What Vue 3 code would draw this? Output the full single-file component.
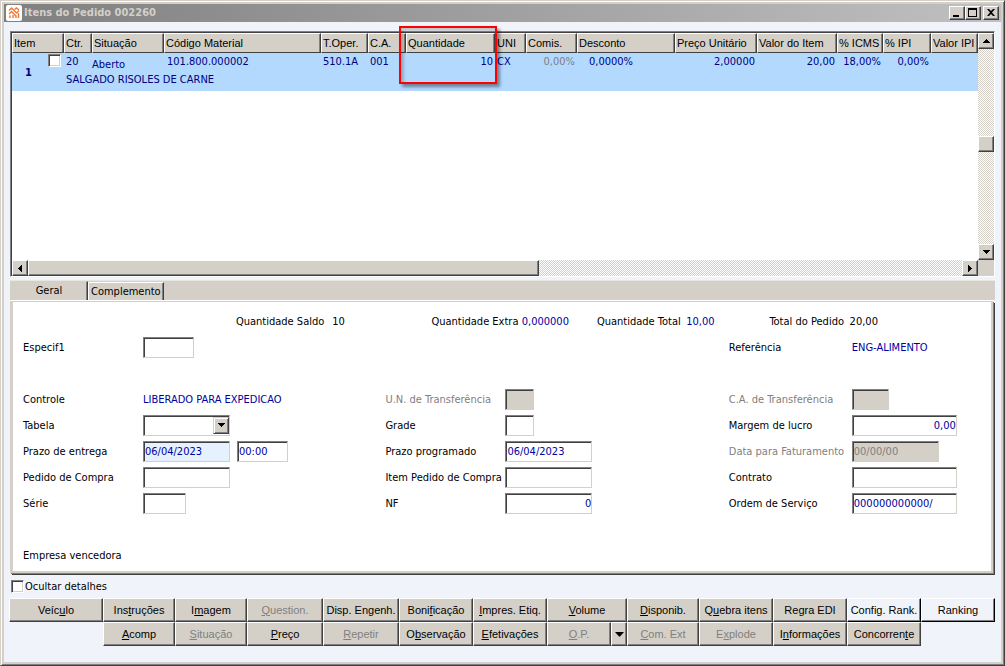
<script setup>
import { ref } from 'vue'

const columns = [
  { w: 52, t: 'Item' }, { w: 28, t: 'Ctr.' }, { w: 72, t: 'Situação' }, { w: 157, t: 'Código Material' },
  { w: 47, t: 'T.Oper.' }, { w: 38, t: 'C.A.' }, { w: 89, t: 'Quantidade' }, { w: 31, t: 'UNI' },
  { w: 51, t: 'Comis.' }, { w: 98, t: 'Desconto' }, { w: 82, t: 'Preço Unitário' }, { w: 80, t: 'Valor do Item' },
  { w: 46, t: '% ICMS' }, { w: 48, t: '% IPI' }, { w: 47, t: 'Valor IPI' }
]

const totals = [
  ['Quantidade Saldo', '10', false],
  ['Quantidade Extra', '0,000000', true],
  ['Quantidade Total', '10,00', true],
  ['Total do Pedido', '20,00', false]
]

const topButtons = [
  ['Veíc', 'u', 'lo'], ['Ins', 't', 'ruções'], ['I', 'm', 'agem'], ['', 'Q', 'uestion.', 'off'],
  ['Disp. Engenh.', '', ''], ['Boni', 'f', 'icação'], ['', 'I', 'mpres. Etiq.'], ['', 'V', 'olume'],
  ['', 'D', 'isponib.'], ['Q', 'u', 'ebra itens'], ['Re', 'g', 'ra EDI'],
  ['Config. Rank.', '', '', 'pale'], ['Ranking', '', '', 'pale']
]
const bottomLeft = [
  ['', 'A', 'comp'], ['', 'S', 'ituação', 'off'], ['', 'P', 'reço'], ['', 'R', 'epetir', 'off'],
  ['O', 'b', 'servação'], ['', 'E', 'fetivações']
]
const bottomRight = [
  ['', 'C', 'om. Ext', 'off'], ['E', 'x', 'plode', 'off'], ['I', 'n', 'formações'], ['Concorren', 't', 'e']
]

const entrega = ref('06/04/2023')
const hora = ref('00:00')
const programado = ref('06/04/2023')
const nf = ref('0')
const margem = ref('0,00')
const faturamento = ref('00/00/00')
const ordem = ref('000000000000/')
</script>

<template>
  <div class="window">
    <header class="titlebar">
      <svg class="logo" viewBox="0 0 16 16" aria-hidden="true">
        <rect x="0" y="0" width="16" height="16" rx="2" fill="#fff" />
        <g fill="none" stroke="#f47a35" stroke-width="1.5">
          <path d="M3 5.500 5.500 3l5 5L13 5.500M8.500 4.500 10.500 3 13 5" />
          <path d="M3 9l2.500-2.500L10 11" />
          <path d="M4 13v-2.500M7 13v-3M10 13v-2.500M12.500 13V8" />
        </g>
      </svg>
      <h1>Itens do Pedido 002260</h1>
      <div class="controls">
        <button type="button" aria-label="Minimizar"><svg viewBox="0 0 12 10"><path d="M2 7h6v2H2z" /></svg></button>
        <button type="button" aria-label="Maximizar"><svg viewBox="0 0 12 10"><path d="M1 0h9v9H1zM2 2v6h7V2z" fill-rule="evenodd" /></svg></button>
        <button type="button" aria-label="Fechar" class="close"><svg viewBox="0 0 12 10"><path d="M2 1h2l2 2 2-2h2L7 4.500 10 8H8L6 6 4 8H2l3-3.500z" /></svg></button>
      </div>
    </header>

    <main>
      <section class="list">
        <div class="rows">
          <table>
            <colgroup><col v-for="(c, i) in columns" :key="c.t" :style="i < 14 ? { width: c.w + 'px' } : {}"></colgroup>
            <thead>
              <tr><th v-for="c in columns" :key="c.t" scope="col">{{ c.t }}</th></tr>
            </thead>
            <tbody>
              <tr class="main-row">
                <td rowspan="2" class="item">
                  <div><b>1</b><input type="checkbox" aria-label="Selecionar item 1"></div>
                </td>
                <td>20</td><td class="low">Aberto</td><td class="code">101.800.000002</td><td>510.1A</td><td>001</td>
                <td class="num">10</td><td>CX</td><td class="num muted">0,00%</td><td class="disc">0,0000%</td>
                <td class="num">2,00000</td><td class="num">20,00</td><td class="num">18,00%</td><td class="num">0,00%</td><td></td>
              </tr>
              <tr class="desc"><td colspan="14">SALGADO RISOLES DE CARNE</td></tr>
            </tbody>
          </table>
        </div>
        <div class="vbar">
          <button type="button" aria-label="Acima"><svg viewBox="0 0 7 4"><path d="M3 0h1v1h1v1h1v1h1v1H0V3h1V2h1V1h1z" /></svg></button>
          <span class="before"></span><span class="thumb"></span><span class="after"></span>
          <button type="button" aria-label="Abaixo"><svg viewBox="0 0 7 4"><path d="M0 0h7v1H6v1H5v1H4v1H3V3H2V2H1V1H0z" /></svg></button>
        </div>
        <div class="hbar">
          <button type="button" aria-label="Esquerda"><svg class="side" viewBox="0 0 4 7"><path d="M4 0v7H3V6H2V5H1V4H0V3h1V2h1V1h1V0z" /></svg></button>
          <span class="thumb"></span><span class="after"></span>
          <button type="button" aria-label="Direita"><svg class="side" viewBox="0 0 4 7"><path d="M0 0v7h1V6h1V5h1V4h1V3H3V2H2V1H1V0z" /></svg></button>
        </div>
        <span class="highlight"></span>
      </section>

      <section class="details">
        <nav class="tabs" role="tablist">
          <button type="button" role="tab" aria-selected="true" class="active">Geral</button>
          <button type="button" role="tab" aria-selected="false">Complemento</button>
        </nav>
        <div class="panel">
          <div class="totals">
            <template v-for="t in totals" :key="t[0]">
              <span>{{ t[0] }}</span><output :class="{ blue: t[2] }">{{ t[1] }}</output>
            </template>
          </div>
          <form class="fields" @submit.prevent>
            <label for="especif">Especif1</label><div><input id="especif" class="w51"></div>
            <span></span><span></span>
            <span>Referência</span><output class="blue">ENG-ALIMENTO</output>

            <span class="blank"></span>

            <span>Controle</span><output class="blue">LIBERADO PARA EXPEDICAO</output>
            <label for="un" class="muted">U.N. de Transferência</label><div><input id="un" class="w29" disabled></div>
            <label for="ca" class="muted">C.A. de Transferência</label><div><input id="ca" class="w37" disabled></div>

            <label for="tabela">Tabela</label>
            <div class="combo">
              <select id="tabela" class="w87"><option></option></select>
              <span class="arrow"><svg viewBox="0 0 7 4"><path d="M0 0h7v1H6v1H5v1H4v1H3V3H2V2H1V1H0z" /></svg></span>
            </div>
            <label for="grade">Grade</label><div><input id="grade" class="w29"></div>
            <label for="margem">Margem de lucro</label><div><input id="margem" v-model="margem" class="w105 right"></div>

            <label for="entrega">Prazo de entrega</label>
            <div><input id="entrega" v-model="entrega" class="w87 focus"><input v-model="hora" class="w51" aria-label="Hora de entrega"></div>
            <label for="programado">Prazo programado</label><div><input id="programado" v-model="programado" class="w87"></div>
            <label for="fat" class="muted">Data para Faturamento</label><div><input id="fat" v-model="faturamento" class="w87" disabled></div>

            <label for="pedido">Pedido de Compra</label><div><input id="pedido" class="w87"></div>
            <label for="itempc">Item Pedido de Compra</label><div><input id="itempc" class="w87"></div>
            <label for="contrato">Contrato</label><div><input id="contrato" class="w105"></div>

            <label for="serie">Série</label><div><input id="serie" class="w43"></div>
            <label for="nf">NF</label><div><input id="nf" v-model="nf" class="w87 right"></div>
            <label for="ordem">Ordem de Serviço</label><div><input id="ordem" v-model="ordem" class="w105"></div>

            <span class="blank"></span>
            <span class="blank">Empresa vencedora</span>
          </form>
        </div>
      </section>

      <label class="hide"><input type="checkbox">Ocultar detalhes</label>

      <div class="actions">
        <button v-for="b in topButtons" :key="b.join('')" type="button" :class="b[3]" :disabled="b[3] === 'off'">{{ b[0] }}<u>{{ b[1] }}</u>{{ b[2] }}</button>
        <span></span>
        <button v-for="b in bottomLeft" :key="b.join('')" type="button" :class="b[3]" :disabled="b[3] === 'off'">{{ b[0] }}<u>{{ b[1] }}</u>{{ b[2] }}</button>
        <div class="split">
          <button type="button" class="off" disabled><u>O</u>.P.</button>
          <button type="button" aria-label="Opções de O.P."><svg viewBox="0 0 9 5"><path d="M0 0h9L5 4.500H4z" /></svg></button>
        </div>
        <button v-for="b in bottomRight" :key="b.join('')" type="button" :class="b[3]" :disabled="b[3] === 'off'">{{ b[0] }}<u>{{ b[1] }}</u>{{ b[2] }}</button>
      </div>
    </main>
  </div>
</template>

<style>
body { margin: 0; background: #f1f3fa; }
</style>

<style scoped>
* { box-sizing: border-box; }
.window {
  min-height: 100vh;
  display: flex;
  flex-direction: column;
  padding: 2px;
  background: #f1f3fa;
  border: 1px solid;
  border-color: #d4d0c8 #404040 #404040 #d4d0c8;
  box-shadow: inset 1px 1px #fff, inset -1px -1px #808080, inset 3px 3px #d4d0c8, inset -3px -3px #d4d0c8;
  font: 11px/13px "DejaVu Sans Condensed", "Noto Sans", sans-serif;
  color: #000;
}
button, input, select { font: inherit; margin: 0; border-radius: 0; }
button {
  padding: 0;
  color: #000;
  background: #d4d0c8;
  border: 1px solid;
  border-color: #fff #404040 #404040 #fff;
  box-shadow: inset -1px -1px #808080;
  white-space: nowrap;
}
svg { display: block; }
.titlebar {
  display: flex;
  align-items: center;
  height: 18px;
  margin: 1px 1px 0;
  padding: 0 2px;
  background: linear-gradient(90deg, #808080, #c0c0c0);
}
.logo { width: 16px; height: 16px; }
h1 { flex: 1; margin: 0 0 0 2px; font: bold 11px/16px "DejaVu Sans Condensed", sans-serif; color: #d4d0c8; }
.controls { display: flex; }
.controls button { width: 16px; height: 14px; display: grid; place-items: center; }
.controls svg { width: 12px; height: 10px; }
.controls .close { margin-left: 2px; }
main { flex: 1; display: flex; flex-direction: column; padding: 9px 7px 17px 7px; }

.list {
  position: relative;
  flex: 1;
  display: grid;
  grid-template: minmax(0, 1fr) 16px / minmax(0, 1fr) 16px;
  min-height: 160px;
  border: 1px solid;
  border-color: #808080 #fff #fff #808080;
  box-shadow: inset 1px 1px #404040;
  padding: 1px 0 0 1px;
  background: #d4d0c8;
}
.rows { background: #fff; overflow: hidden; }
table { width: 100%; border-collapse: separate; border-spacing: 0; table-layout: fixed; }
th {
  height: 20px;
  padding: 0 0 0 1px;
  font: 11px/13px "Liberation Sans", sans-serif;
  text-align: left;
  white-space: nowrap;
  overflow: hidden;
  background: #d4d0c8;
  border: 1px solid;
  border-color: #fff #404040 #404040 #fff;
  box-shadow: inset -1px 0 #808080;
}
td { height: 19px; padding: 0 2px; color: #000080; background: #b3d9ff; white-space: nowrap; vertical-align: middle; }
.main-row td { padding-bottom: 2px; }
.main-row .item { padding: 0 3px 0 13px; }
.item div { display: flex; justify-content: space-between; align-items: center; height: 38px; }
.item input { align-self: flex-start; margin-top: 1px; }
.main-row .low { padding: 4px 0 0; }
.code { padding-left: 3px; }
.disc { padding-left: 12px; }
.num { text-align: right; }
.muted, td.muted { color: #808080; }
.desc td { padding-bottom: 4px; }
.vbar, .hbar {
  display: flex;
  background: repeating-conic-gradient(#d4d0c8 0 25%, #fff 0 50%) 0 0 / 2px 2px;
}
.vbar { flex-direction: column; }
.vbar button, .hbar button { flex: none; width: 16px; height: 16px; display: grid; place-items: center; }
.vbar svg, .arrow svg { width: 7px; height: 4px; }
.side { width: 4px; height: 7px; }
.thumb { background: #d4d0c8; border: 1px solid; border-color: #fff #404040 #404040 #fff; box-shadow: inset -1px -1px #808080; }
.vbar .before { flex: 87; }
.vbar .thumb { height: 16px; }
.vbar .after { flex: 92; }
.hbar .thumb { flex: 510; }
.hbar .after { flex: 424; }
.highlight {
  position: absolute;
  left: 388px;
  top: -6px;
  width: 98px;
  height: 58px;
  border: 2px solid #f00;
  box-shadow: 3px 3px 3px #0006, inset 3px 3px 3px #0003;
  pointer-events: none;
}

.details { margin-top: 3px; }
.tabs { display: flex; align-items: flex-end; height: 20px; background: #d4d0c8; border-top: 1px solid #e8e6e0; }
.tabs button { height: 18px; padding: 0 2px; border-width: 1px 1px 0 1px; box-shadow: inset -1px 0 #808080; }
.tabs .active { width: 78px; height: 19px; padding-bottom: 2px; border-color: #d4d0c8 #404040 #d4d0c8 #d4d0c8; }
.panel {
  padding: 6px 0 3px 10px;
  background: #fff;
  border: solid #d4d0c8;
  border-width: 1px 2px 2px 3px;
  margin: 1px 2px 2px 0;
  box-shadow: 0 -1px #fff, 1px 1px #808080, 2px 2px #404040;
}
.totals {
  display: grid;
  grid-template-columns: 96fr 99fr 90fr 75fr 89fr 83fr 80fr 141fr;
  align-items: center;
  height: 26px;
  padding-left: 22%;
  white-space: nowrap;
}
.fields {
  display: grid;
  grid-template-columns: 120px 242fr 120px 223fr 123px 139fr;
  grid-auto-rows: 26px;
  align-items: center;
  white-space: nowrap;
}
.fields > div { display: flex; gap: 7px; }
.blank { grid-column: 1 / -1; }
.blue { color: #0000a0; }
.fields input, select {
  height: 21px;
  padding: 1px 0 0 1px;
  color: #0000a0;
  background: #fff;
  border: 1px solid;
  border-color: #808080 #d4d0c8 #d4d0c8 #808080;
  box-shadow: inset 1px 1px #404040;
  outline: 0;
}
.fields input:disabled { background: #d4d0c8; color: #808080; }
.fields .focus { background: #e6f1ff; }
.fields .right { text-align: right; }
.w29 { width: 29px; }
.w37 { width: 37px; }
.w43 { width: 43px; }
.w51 { width: 51px; }
.w87 { width: 87px; }
.w105 { width: 105px; }
select { appearance: none; }
.combo { position: relative; width: 87px; }
.arrow {
  position: absolute;
  right: 1px;
  top: 2px;
  width: 16px;
  height: 17px;
  display: grid;
  place-items: center;
  background: #d4d0c8;
  border: 1px solid;
  border-color: #d4d0c8 #404040 #404040 #d4d0c8;
  box-shadow: inset 1px 1px #fff, inset -1px -1px #808080;
  pointer-events: none;
}
input[type='checkbox'] {
  appearance: none;
  width: 13px;
  height: 13px;
  background: #fff;
  border: 1px solid;
  border-color: #808080 #fff #fff #808080;
  box-shadow: inset 1px 1px #404040, inset -1px -1px #d4d0c8;
}
.hide { display: flex; align-items: center; align-self: flex-start; gap: 1px; margin: 5px 0 5px 1px; }
.actions {
  display: grid;
  grid-template-columns: 94fr 72fr 72fr 76fr 76fr 74fr 74fr 80fr 72fr 74fr 74fr 74fr 74fr;
  grid-auto-rows: 24px;
  margin-left: -1px;
}
.actions button { min-width: 0; font-family: "Liberation Sans", sans-serif; }
.actions .off { color: #808080; }
.actions .pale { background: #f1f3fa; border-color: #fff #000 #000 #fff; }
.split { display: grid; grid-template-columns: 1fr 16px; }
.split button { display: block; }
.split svg { width: 9px; height: 5px; margin: 0 auto; }
</style>
